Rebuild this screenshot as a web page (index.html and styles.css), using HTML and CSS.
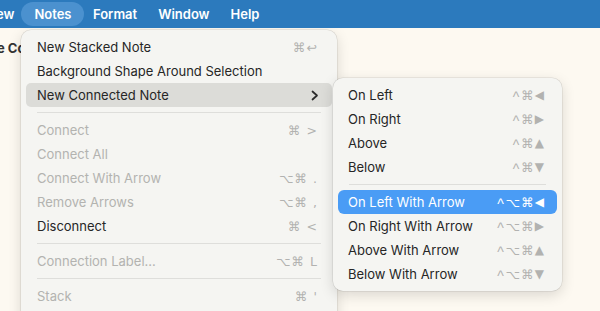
FILE: index.html
```html
<!DOCTYPE html>
<html>
<head>
<meta charset="utf-8">
<link rel="stylesheet" href="styles.css">
</head>
<body>
<div class="menubar">
  <span class="mb-item cut">ew</span>
  <span class="mb-item active">Notes</span>
  <span class="mb-item">Format</span>
  <span class="mb-item">Window</span>
  <span class="mb-item">Help</span>
</div>
<div class="canvas">
  <div class="doc-title">e Co</div>

  <div class="menu main">
    <div class="item"><span>New Stacked Note</span><span class="sc">⌘↩</span></div>
    <div class="item"><span>Background Shape Around Selection</span><span class="sc"></span></div>
    <div class="item hover"><span>New Connected Note</span><span class="chev"><svg width="8" height="11" viewBox="0 0 8 11"><path d="M1.5 1.5 L6 5.5 L1.5 9.5" fill="none" stroke="#2a2a2a" stroke-width="1.7" stroke-linecap="round" stroke-linejoin="round"/></svg></span></div>
    <div class="sep"></div>
    <div class="item dis"><span>Connect</span><span class="sc">⌘ &gt;</span></div>
    <div class="item dis"><span>Connect All</span><span class="sc"></span></div>
    <div class="item dis"><span>Connect With Arrow</span><span class="sc">⌥⌘ .</span></div>
    <div class="item dis"><span>Remove Arrows</span><span class="sc">⌥⌘ ,</span></div>
    <div class="item"><span>Disconnect</span><span class="sc">⌘ &lt;</span></div>
    <div class="sep"></div>
    <div class="item dis"><span>Connection Label...</span><span class="sc">⌥⌘ L</span></div>
    <div class="sep"></div>
    <div class="item dis"><span>Stack</span><span class="sc">⌘ '</span></div>
  </div>

  <div class="menu sub">
    <div class="item"><span>On Left</span><span class="sc"><span class="ctl">^</span>⌘<span class="ar">◀</span></span></div>
    <div class="item"><span>On Right</span><span class="sc"><span class="ctl">^</span>⌘<span class="ar">▶</span></span></div>
    <div class="item"><span>Above</span><span class="sc"><span class="ctl">^</span>⌘<span class="ar">▲</span></span></div>
    <div class="item"><span>Below</span><span class="sc"><span class="ctl">^</span>⌘<span class="ar">▼</span></span></div>
    <div class="sep"></div>
    <div class="item sel"><span>On Left With Arrow</span><span class="sc"><span class="ctl">^</span>⌥⌘<span class="ar">◀</span></span></div>
    <div class="item"><span>On Right With Arrow</span><span class="sc"><span class="ctl">^</span>⌥⌘<span class="ar">▶</span></span></div>
    <div class="item"><span>Above With Arrow</span><span class="sc"><span class="ctl">^</span>⌥⌘<span class="ar">▲</span></span></div>
    <div class="item"><span>Below With Arrow</span><span class="sc"><span class="ctl">^</span>⌥⌘<span class="ar">▼</span></span></div>
  </div>
</div>
</body>
</html>
```
FILE: styles.css
```css
html, body {
  margin: 0;
  padding: 0;
  width: 600px;
  height: 311px;
  overflow: hidden;
  background: #fdf9f1;
  font-family: Inter, "Noto Sans", "Liberation Sans", sans-serif;
}
.menubar {
  height: 28px;
  background: #2c7abd;
  display: flex;
  align-items: center;
}
.mb-item {
  color: #fff;
  font-weight: 600;
  font-size: 13px;
  padding: 4px 10.5px;
  border-radius: 12px;
  line-height: 16px;
}
.mb-item.cut {
  padding-left: 0;
  padding-right: 7px;
  margin-left: -4px;
}
.mb-item.active {
  background: #4b91cf;
  padding: 4px 13px;
  margin-right: -2px;
}
.canvas {
  position: relative;
  height: 283px;
  overflow: hidden;
}
.doc-title {
  font-weight: 700;
  font-size: 13px;
  color: #333;
  padding-top: 12px;
  margin-left: -3px;
}
.menu {
  position: absolute;
  background: #f5f5f2;
  border-radius: 10px;
  box-shadow: 0 0 0 0.5px rgba(0,0,0,0.12), 0 4px 14px rgba(0,0,0,0.14);
  padding: 5px;
  box-sizing: border-box;
  font-size: 13px;
  color: #262626;
}
.menu.main {
  left: 21px;
  top: 2px;
  width: 316px;
  height: 300px;
}
.menu.sub {
  left: 333px;
  top: 50px;
  width: 229px;
}
.item {
  height: 24px;
  display: flex;
  align-items: center;
  justify-content: space-between;
  padding: 0 13px 0 10px;
  border-radius: 5px;
}
.main .item { padding: 0 14px 0 11px; }
.item.hover { background: #dcdcd8; }
.item.dis { color: #b3b3b0; }
.item.sel { background: #4a9cf5; color: #fff; border-radius: 6px; }
.sc {
  color: #b2b2b0;
  font-family: "DejaVu Sans", sans-serif;
  font-size: 12.5px;
  letter-spacing: 1px;
  display: flex;
  align-items: center;
}
.sc .ctl {
  font-family: "Liberation Sans", sans-serif;
  font-size: 14px;
  margin-top: 3px;
  margin-right: 1px;
}
.sc .ar {
  font-size: 12px;
  letter-spacing: 0;
}
.sel .sc { color: #fff; }
.chev { display: flex; align-items: center; margin-right: -1px; }
.sep {
  height: 1px;
  background: #dededb;
  margin: 5px 11px;
}
```
